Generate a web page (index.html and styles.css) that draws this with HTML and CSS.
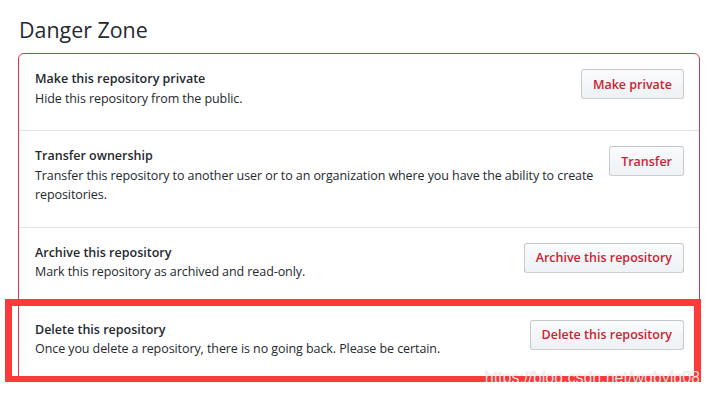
FILE: index.html
```html
<!DOCTYPE html>
<html lang="en">
<head>
  <meta charset="UTF-8">
  <meta name="viewport" content="width=device-width, initial-scale=1.0">
  <title>Danger Zone</title>
  <link rel="stylesheet" href="styles.css">
</head>
<body>

<div class="page">
  <h2 class="subhead">Danger Zone</h2>

  <!-- Danger Zone box -->
  <div class="danger-box">
    <div class="danger-row">
      <div class="row-text">
        <div class="row-title">Make this repository private</div>
        <p class="row-desc">Hide this repository from the public.</p>
      </div>
      <button class="btn btn-danger">Make private</button>
    </div>

    <div class="danger-row">
      <div class="row-text">
        <div class="row-title">Transfer ownership</div>
        <p class="row-desc">Transfer this repository to another user or to an organization where you have the ability to create repositories.</p>
      </div>
      <button class="btn btn-danger">Transfer</button>
    </div>

    <div class="danger-row">
      <div class="row-text">
        <div class="row-title">Archive this repository</div>
        <p class="row-desc">Mark this repository as archived and read-only.</p>
      </div>
      <button class="btn btn-danger">Archive this repository</button>
    </div>

    <div class="danger-row highlighted">
      <div class="row-text">
        <div class="row-title">Delete this repository</div>
        <p class="row-desc">Once you delete a repository, there is no going back. Please be certain.</p>
      </div>
      <button class="btn btn-danger">Delete this repository</button>
      <span class="highlight-frame"></span>
    </div>
  </div>

  <span class="watermark">https://blog.csdn.net/wqbylg08</span>
</div>

</body>
</html>
```

FILE: styles.css
```css
body {
  font-family: "Open Sans", "Noto Sans", sans-serif;
  margin: 0;
  padding: 0;
  background-color: #fff;
  color: #24292e;
}

.page {
  position: relative;
  padding: 15px 10px 0 18px;
}

.subhead {
  font-size: 21.4px;
  font-weight: 400;
  line-height: 30px;
  margin: 0 0 8px 1px;
}

.danger-box {
  border: 1px solid #d73a49;
  border-radius: 6px;
}

.danger-row {
  display: flex;
  align-items: flex-start;
  gap: 8px;
  padding: 15px 15px 22px 16px;
  border-top: 1px solid #e1e4e8;
}

.danger-row:first-child {
  border-top: none;
}

.row-text {
  flex: 1;
  font-size: 12.5px;
  line-height: 19.5px;
}

.row-title {
  font-weight: 600;
}

.row-desc {
  margin: 0;
  letter-spacing: -0.08px;
}

.btn {
  flex: none;
  height: 30px;
  padding: 0 11px;
  font-family: inherit;
  font-size: 12.5px;
  font-weight: 600;
  border: 1px solid rgba(27, 31, 35, 0.2);
  border-radius: 3px;
  background-image: linear-gradient(-180deg, #fafbfc 0%, #eff3f6 90%);
  cursor: pointer;
}

.btn-danger {
  color: #cb2431;
}

/* red annotation frame drawn over the last row */
.highlighted {
  position: relative;
}

.highlight-frame {
  position: absolute;
  left: -14px;
  top: -6px;
  right: -2px;
  bottom: -2px;
  border: 7px solid #fc3a3a;
}

.watermark {
  position: absolute;
  right: 10px;
  top: 369px;
  font-family: "Liberation Sans", Arial, sans-serif;
  font-size: 16px;
  color: rgba(255, 255, 255, 0.85);
  text-shadow: 0 0 1px rgba(0, 0, 0, 0.3);
}
```
